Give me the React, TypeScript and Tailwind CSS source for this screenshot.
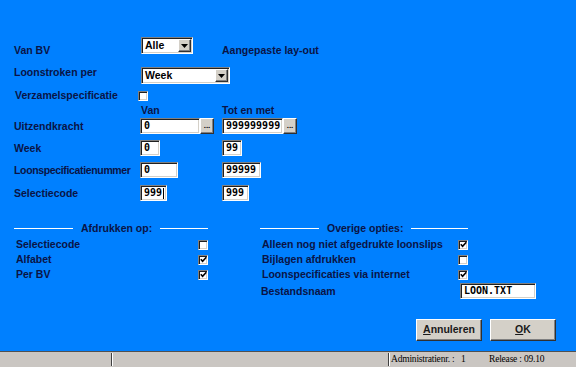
import React from "react";

const sunken =
  "border border-t-[#808080] border-l-[#808080] border-b-white border-r-white shadow-[inset_1px_1px_0_#202020,inset_-1px_-1px_0_#d4d0c8]";
const raised =
  "border border-t-white border-l-white border-b-[#303030] border-r-[#303030] shadow-[inset_-1px_-1px_0_#808080]";
const mono = "font-['DejaVu_Sans_Mono',monospace] text-[10px] font-bold text-black";

function Field({ value, className, cursor }: { value: string; className: string; cursor?: boolean }) {
  return (
    <div className={`flex h-[16px] items-center bg-white pl-[3px] ${sunken} ${className}`}>
      <span className={`${mono} leading-none`}>{value}</span>
      {cursor && <span className="ml-px h-[11px] w-px bg-black" />}
    </div>
  );
}

function DotsButton() {
  return (
    <div className={`flex h-[16px] w-[14px] items-end justify-center bg-[#d4d0c8] pb-[3px] ${raised}`}>
      <span className="text-[8px] leading-none text-black">...</span>
    </div>
  );
}

function Select({ value, className }: { value: string; className: string }) {
  return (
    <div className={`flex h-[17px] items-center bg-white pl-[3px] pr-px ${sunken} ${className}`}>
      <span className="flex-1 leading-none text-black">{value}</span>
      <div className={`flex h-[13px] w-[13px] items-center justify-center bg-[#d4d0c8] ${raised}`}>
        <svg width="7" height="4" viewBox="0 0 7 4">
          <path d="M0 0 H7 L3.5 4 Z" fill="#000" />
        </svg>
      </div>
    </div>
  );
}

function Check({ checked }: { checked?: boolean }) {
  return (
    <div className={`flex h-[10px] w-[10px] items-center justify-center bg-white ${sunken}`}>
      {checked && (
        <svg width="7" height="7" viewBox="0 0 7 7">
          <polyline points="0.8,3.2 2.6,5.2 6.3,1.2" fill="none" stroke="#000" strokeWidth="1.6" />
        </svg>
      )}
    </div>
  );
}

function Divider({ title }: { title: string }) {
  return (
    <div className="flex h-[13px] items-center">
      <div className="h-px w-[59px] bg-white" />
      <span className="px-[8px] leading-[13px]">{title}</span>
      <div className="h-px flex-1 bg-white" />
    </div>
  );
}

function WinButton({ accel, rest }: { accel: string; rest: string }) {
  return (
    <div className={`flex h-[22px] w-[66px] items-center justify-center bg-[#d4d0c8] text-[#1a1a1a] ${raised}`}>
      <span>
        <span className="underline underline-offset-1">{accel}</span>
        {rest}
      </span>
    </div>
  );
}

export default function App() {
  return (
    <div className="flex h-[367px] w-[576px] flex-col overflow-hidden bg-[#0080ff] font-['Liberation_Sans',Arial,sans-serif] text-[10.5px] font-bold text-[#0a1446]">
      <div className="flex-1">
        {/* bovenste formulier */}
        <div className="pl-[14px] pt-[37px] leading-[13px]">
          <div className="flex h-[17px]">
            <div className="w-[127px] pt-[7px]">Van BV</div>
            <Select value="Alle" className="w-[52px]" />
            <div className="ml-[29px] pt-[7px]">Aangepaste lay-out</div>
          </div>

          <div className="mt-[13px] flex h-[17px]">
            <div className="-mt-px w-[127px]">Loonstroken per</div>
            <Select value="Week" className="w-[89px]" />
          </div>

          <div className="mt-[7px] flex h-[10px]">
            <div className="-mt-[2px] w-[124px] pl-px">Verzamelspecificatie</div>
            <Check />
          </div>

          <div className="mt-[3px] flex h-[13px]">
            <div className="w-[127px]" />
            <div className="w-[81px]">Van</div>
            <div>Tot en met</div>
          </div>

          <div className="mt-px flex h-[16px] items-center">
            <div className="w-[126px]">Uitzendkracht</div>
            <Field value="0" className="w-[60px]" />
            <DotsButton />
            <Field value="999999999" className="ml-[8px] w-[61px]" />
            <DotsButton />
          </div>

          <div className="mt-[6px] flex h-[16px] items-center">
            <div className="w-[126px]">Week</div>
            <Field value="0" className="w-[20px]" />
            <Field value="99" className="ml-[62px] w-[20px]" />
          </div>

          <div className="mt-[6px] flex h-[16px] items-center">
            <div className="w-[126px] whitespace-nowrap tracking-[-0.35px]">Loonspecificatienummer</div>
            <Field value="0" className="w-[38px]" />
            <Field value="99999" className="ml-[44px] w-[39px]" />
          </div>

          <div className="mt-[7px] flex h-[16px] items-center">
            <div className="w-[126px]">Selectiecode</div>
            <Field value="999" className="w-[27px]" cursor />
            <Field value="999" className="ml-[55px] w-[27px]" />
          </div>
        </div>

        {/* afdrukopties */}
        <div className="mt-[21px] flex items-start pl-[14px] leading-[13px]">
          <div className="w-[194px]">
            <Divider title="Afdrukken op:" />
            <div className="mt-[2px]">
              <div className="flex h-[15px] items-center justify-between pl-[2px]">
                <span>Selectiecode</span>
                <Check />
              </div>
              <div className="flex h-[15px] items-center justify-between pl-[2px]">
                <span>Alfabet</span>
                <Check checked />
              </div>
              <div className="flex h-[15px] items-center justify-between pl-[2px]">
                <span>Per BV</span>
                <Check checked />
              </div>
            </div>
          </div>

          <div className="ml-[52px] w-[276px]">
            <div className="w-[208px]">
              <Divider title="Overige opties:" />
            </div>
            <div className="mt-[2px]">
              <div className="flex h-[15px] w-[208px] items-center justify-between pl-[2px]">
                <span>Alleen nog niet afgedrukte loonslips</span>
                <Check checked />
              </div>
              <div className="flex h-[15px] w-[208px] items-center justify-between pl-[2px]">
                <span>Bijlagen afdrukken</span>
                <Check />
              </div>
              <div className="flex h-[15px] w-[208px] items-center justify-between pl-[2px]">
                <span>Loonspecificaties via internet</span>
                <Check checked />
              </div>
              <div className="mt-px flex h-[16px] items-center justify-between pl-px">
                <span>Bestandsnaam</span>
                <Field value="LOON.TXT" className="w-[76px]" />
              </div>
            </div>
          </div>
        </div>

        {/* knoppen */}
        <div className="mt-[20px] flex justify-end gap-[8px] pr-[20px]">
          <WinButton accel="A" rest="nnuleren" />
          <WinButton accel="O" rest="K" />
        </div>
      </div>

      {/* statusbalk */}
      <div className="flex h-[16px] items-center border-t border-t-[#505050] bg-[#cac6c2] font-['Liberation_Serif',serif] text-[9.5px] font-normal text-black">
        <div className="w-[111px]" />
        <div className="h-[13px] w-[2px] border-l border-l-[#404040] border-r border-r-white" />
        <div className="w-[275px]" />
        <div className="h-[13px] w-[2px] border-l border-l-[#404040] border-r border-r-white" />
        <div className="flex items-center whitespace-nowrap leading-none tracking-[-0.2px]">
          <span className="ml-px w-[70px]">Administratienr. :</span>
          <span className="w-[28px]">1</span>
          <span>Release : 09.10</span>
        </div>
      </div>
    </div>
  );
}
